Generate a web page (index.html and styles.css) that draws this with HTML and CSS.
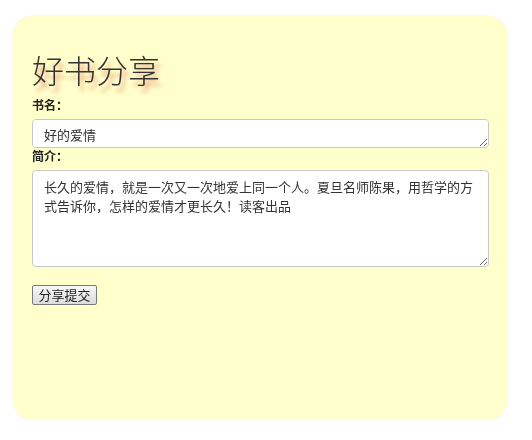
FILE: index.html
```html
<!DOCTYPE html>
<html lang="zh-CN">
<head>
    <meta charset="UTF-8">
    <meta name="viewport" content="width=device-width, initial-scale=1.0">
    <title>好书分享</title>
    <link rel="stylesheet" href="styles.css">
</head>
<body>
    <div class="container">
        <h1>好书分享</h1>
        <form class="share-form">
            <label class="field-label" for="book-name">书名：</label>
            <textarea id="book-name" class="book-name">好的爱情</textarea>
            <label class="field-label" for="book-intro">简介：</label>
            <textarea id="book-intro" class="book-intro">长久的爱情，就是一次又一次地爱上同一个人。夏旦名师陈果，用哲学的方式告诉你，怎样的爱情才更长久！读客出品</textarea>
            <button type="button" class="submit-btn">分享提交</button>
        </form>
    </div>
</body>
</html>
```

FILE: styles.css
```css
body {
    font-family: "Noto Sans CJK SC", sans-serif;
    background-color: #fff;
    margin: 0;
    padding: 0;
}

.container {
    width: 494px;
    height: 404px;
    box-sizing: border-box;
    margin: 16px 0 0 13px;
    padding: 33px 18px 0 19px;
    background-color: #ffffcc;
    border-radius: 20px;
    box-shadow: 0 0 2px rgba(200, 190, 140, 0.35);
}

h1 {
    margin: 0 0 8px 0;
    font-size: 32px;
    line-height: 40px;
    font-weight: 300;
    color: #333;
    text-shadow: 3px 6px 4px #eaa07a;
}

.share-form {
    margin: 0;
}

.field-label {
    display: block;
    font-size: 12px;
    line-height: 16px;
    font-weight: bold;
    color: #222;
}

textarea {
    display: block;
    width: 457px;
    box-sizing: border-box;
    margin: 6px 0 0 0;
    padding: 5px 10px 4px 11px;
    font-family: "Noto Sans CJK SC", sans-serif;
    font-size: 13px;
    line-height: 19px;
    color: #333;
    background-color: #fff;
    border: 1px solid #c8c8c8;
    border-radius: 4px;
}

.book-name {
    height: 29px;
}

.book-intro {
    height: 97px;
    padding-top: 6px;
}

.submit-btn {
    display: block;
    margin-top: 18px;
    width: 65px;
    height: 20px;
    padding: 0;
    font-family: "Noto Sans CJK SC", sans-serif;
    font-size: 13px;
    line-height: 18px;
    color: #222;
    background: linear-gradient(#f8f8f8, #dcdcdc);
    border: 1px solid #7a7a7a;
    border-radius: 2px;
}
```
